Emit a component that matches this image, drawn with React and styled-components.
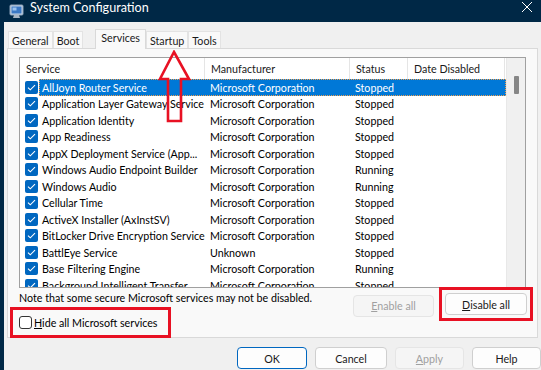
import React from "react";
import styled, { createGlobalStyle, css } from "styled-components";

const Global = createGlobalStyle`
  html, body { margin: 0; padding: 0; background: #002846; }
  body { font-family: "Lato", "Noto Sans", sans-serif; }
  * { box-sizing: border-box; }
`;

const FS = "10.7px";

const Window = styled.div`
  width: 541px;
  height: 370px;
  overflow: hidden;
  display: flex;
  flex-direction: column;
  background: #002846;
  position: relative;
`;

const TitleBar = styled.div`
  height: 22px;
  display: flex;
  align-items: center;
  padding-left: 9px;
  color: #fff;
  font-size: 12.6px;
  gap: 6px;
  flex-shrink: 0;
`;

const Title = styled.span`
  flex: 1;
  line-height: 1;
  margin-top: -5px;
  white-space: nowrap;
`;

const Close = styled.div`
  width: 12px;
  height: 12px;
  margin-right: 8px;
  margin-top: -8px;
  display: flex;
`;

const Body = styled.div`
  flex: 1;
  margin-left: 4px;
  background: #f0f0f0;
  display: flex;
  flex-direction: column;
  padding: 8px 3px 0 3px;
`;

const TabRow = styled.div`
  display: flex;
  align-items: flex-end;
  height: 18px;
  padding-left: 1px;
  position: relative;
  z-index: 1;
`;

const Tab = styled.div`
  font-size: ${FS};
  height: 17px;
  padding: 0 3px;
  display: flex;
  align-items: center;
  background: #f9f9f9;
  border: 1px solid #e3e3e3;
  border-bottom: none;
  color: #1a1a1a;
  white-space: nowrap;
  margin-left: ${p => p.$gap || 0}px;
  ${p => p.$active && css`
    height: 20px;
    padding: 0 5px 4px;
    margin-bottom: -1px;
    background: #f9f9f9;
    border-color: #d9d9d9;
  `}
`;

const Panel = styled.div`
  height: 290px;
  background: #f9f9f9;
  border: 1px solid #d9d9d9;
  padding: 8px 11px 0 11px;
  display: flex;
  flex-direction: column;
`;

const ListView = styled.div`
  height: 231px;
  border: 1px solid #a0a0a0;
  background: #fff;
  display: flex;
  overflow: hidden;
  flex-shrink: 0;
`;

const ListMain = styled.div`
  flex: 1;
  display: flex;
  flex-direction: column;
  overflow: hidden;
`;

const cols = "185px 145px 58px 97px";

const Header = styled.div`
  display: grid;
  grid-template-columns: ${cols};
  height: 21px;
  flex-shrink: 0;
`;

const HeadCell = styled.div`
  font-size: ${FS};
  color: #1a1a1a;
  padding-left: 6px;
  display: flex;
  align-items: center;
  border-right: 1px solid #e5e5e5;
  white-space: nowrap;
`;

const Row = styled.div`
  display: grid;
  grid-template-columns: ${cols};
  height: 16.5px;
  flex-shrink: 0;
  font-size: ${FS};
  color: #000;
  position: relative;
`;

const NameCell = styled.div`
  display: flex;
  align-items: center;
  padding-left: 5px;
  gap: 3px;
  white-space: nowrap;
`;

const Cell = styled.div`
  display: flex;
  align-items: center;
  padding-left: 5px;
  white-space: nowrap;
  overflow: hidden;
  color: ${p => (p.$sel ? "#fff" : "#000")};
  position: relative;
`;

const Label = styled.span`
  flex: 1;
  height: 100%;
  display: flex;
  align-items: center;
  padding-left: 1px;
  position: relative;
  color: ${p => (p.$sel ? "#fff" : "#000")};
`;

const SelectedBand = styled.div`
  position: absolute;
  left: 19px;
  right: 0;
  top: 0;
  bottom: 0;
  background: #0078d7;
  outline: 1px dotted #f0a050;
  outline-offset: -1px;
`;

const Check = styled.span`
  width: 13px;
  height: 13px;
  border-radius: 2px;
  background: #0067c0;
  display: inline-flex;
  align-items: center;
  justify-content: center;
  flex-shrink: 0;
`;

const ScrollBar = styled.div`
  width: 19px;
  background: #f0f0f0;
  border-left: 1px solid #e8e8e8;
  display: flex;
  justify-content: center;
  padding-top: 18px;
`;

const Thumb = styled.div`
  width: 5px;
  height: 18px;
  background: #868686;
  border-radius: 1px;
`;

const Footer = styled.div`
  display: flex;
  justify-content: space-between;
  height: 50px;
`;

const FooterLeft = styled.div`
  display: flex;
  flex-direction: column;
`;

const Note = styled.div`
  font-size: ${FS};
  color: #000;
  margin-top: 2px;
  height: 16px;
  display: flex;
  align-items: center;
  white-space: nowrap;
`;

const RedBox = styled.div`
  border: 3px solid #e81123;
  display: flex;
  align-items: center;
`;

const HideBox = styled(RedBox)`
  margin-left: -9px;
  margin-top: 1px;
  width: 161px;
  height: 32px;
  padding-left: 6px;
  gap: 2px;
  font-size: ${FS};
  white-space: nowrap;
`;

const EmptyCheck = styled.span`
  width: 13px;
  height: 13px;
  border: 1px solid #333;
  border-radius: 3px;
  background: #fff;
  display: inline-block;
  margin-top: 1px;
  flex-shrink: 0;
`;

const FooterRight = styled.div`
  display: flex;
  align-items: flex-start;
  gap: 5px;
  margin-right: -7px;
  margin-top: -2px;
`;

const Button = styled.button`
  font-family: inherit;
  font-size: ${FS};
  height: 22px;
  width: ${p => p.$w || 72}px;
  border-radius: 4px;
  border: 1px solid #cfcfcf;
  background: ${p => (p.$disabled ? "#f5f5f5" : "#fdfdfd")};
  color: ${p => (p.$disabled ? "#a0a0a0" : "#1a1a1a")};
  border-color: ${p => (p.$disabled ? "#e5e5e5" : p.$primary ? "#0067c0" : "#cfcfcf")};
  padding: 0;
  display: inline-flex;
  align-items: center;
  justify-content: center;
  white-space: nowrap;
  ${p => p.$primary && css`box-shadow: inset 0 0 0 1px #fdfdfd;`}
`;

const DisableBox = styled(RedBox)`
  padding: 5px 3px;
  margin-top: 1px;
  width: 94px;
  height: 34px;
  justify-content: center;
`;

const EnableWrap = styled.div`
  margin-top: 8px;
`;

const BottomBar = styled.div`
  display: flex;
  justify-content: flex-end;
  gap: 8px;
  padding-top: 9px;
  margin-right: -3px;
`;

const Arrow = styled.svg`
  position: absolute;
  left: 158px;
  top: 50px;
  pointer-events: none;
`;

const rows = [
  ["AllJoyn Router Service", "Microsoft Corporation", "Stopped"],
  ["Application Layer Gateway Service", "Microsoft Corporation", "Stopped"],
  ["Application Identity", "Microsoft Corporation", "Stopped"],
  ["App Readiness", "Microsoft Corporation", "Stopped"],
  ["AppX Deployment Service (App...", "Microsoft Corporation", "Stopped"],
  ["Windows Audio Endpoint Builder", "Microsoft Corporation", "Running"],
  ["Windows Audio", "Microsoft Corporation", "Running"],
  ["Cellular Time", "Microsoft Corporation", "Stopped"],
  ["ActiveX Installer (AxInstSV)", "Microsoft Corporation", "Stopped"],
  ["BitLocker Drive Encryption Service", "Microsoft Corporation", "Stopped"],
  ["BattlEye Service", "Unknown", "Stopped"],
  ["Base Filtering Engine", "Microsoft Corporation", "Running"],
  ["Background Intelligent Transfer...", "Microsoft Corporation", "Stopped"],
];

const CheckMark = () => (
  <Check>
    <svg width="9" height="7" viewBox="0 0 9 7">
      <path d="M1 3.6 L3.3 5.8 L8 1.2" stroke="#fff" strokeWidth="1.1" fill="none" />
    </svg>
  </Check>
);

const AppIcon = () => (
  <svg width="15" height="15" viewBox="0 0 15 15">
    <rect x="1" y="1" width="13" height="10" rx="1" fill="#c9d6e6" stroke="#8aa0b8" />
    <rect x="2.5" y="2.5" width="10" height="7" fill="#3b78c4" />
    <rect x="3.5" y="3.5" width="4" height="3" fill="#9cc3ee" />
    <path d="M5 11 L4 14 H11 L10 11 Z" fill="#aab6c4" />
  </svg>
);

export default function App() {
  return (
    <Window>
      <Global />
      <TitleBar>
        <AppIcon />
        <Title>System Configuration</Title>
        <Close>
          <svg width="12" height="12" viewBox="0 0 12 12">
            <path d="M1 1 L11 11 M11 1 L1 11" stroke="#fff" strokeWidth="1" />
          </svg>
        </Close>
      </TitleBar>
      <Body>
        <TabRow>
          <Tab>General</Tab>
          <Tab>Boot</Tab>
          <Tab $active $gap={12}>Services</Tab>
          <Tab>Startup</Tab>
          <Tab>Tools</Tab>
        </TabRow>
        <Panel>
          <ListView>
            <ListMain>
              <Header>
                <HeadCell>Service</HeadCell>
                <HeadCell>Manufacturer</HeadCell>
                <HeadCell>Status</HeadCell>
                <HeadCell>Date Disabled</HeadCell>
              </Header>
              {rows.map(([name, man, status], i) => (
                <Row key={i}>
                  {i === 0 && <SelectedBand />}
                  <NameCell>
                    <CheckMark />
                    <Label $sel={i === 0}>{name}</Label>
                  </NameCell>
                  <Cell $sel={i === 0}>{man}</Cell>
                  <Cell $sel={i === 0}>{status}</Cell>
                  <Cell />
                </Row>
              ))}
            </ListMain>
            <ScrollBar>
              <Thumb />
            </ScrollBar>
          </ListView>
          <Footer>
            <FooterLeft>
              <Note>Note that some secure Microsoft services may not be disabled.</Note>
              <HideBox>
                <EmptyCheck />
                <span><u>H</u>ide all Microsoft services</span>
              </HideBox>
            </FooterLeft>
            <FooterRight>
              <EnableWrap>
                <Button $disabled $w={81}><u>E</u>nable all</Button>
              </EnableWrap>
              <DisableBox>
                <Button $w={82}><u>D</u>isable all</Button>
              </DisableBox>
            </FooterRight>
          </Footer>
        </Panel>
        <BottomBar>
          <Button $primary $w={70}>OK</Button>
          <Button $w={72}>Cancel</Button>
          <Button $disabled $w={69}><u>A</u>pply</Button>
          <Button $w={69}>Help</Button>
        </BottomBar>
      </Body>
      <Arrow width="34" height="74" viewBox="0 0 34 74">
        <path d="M16 2 L31 29 L23 29 L23 71 L10 71 L10 29 L2 29 Z" fill="none" stroke="#e81123" strokeWidth="2.6" strokeLinejoin="miter" />
      </Arrow>
    </Window>
  );
}
